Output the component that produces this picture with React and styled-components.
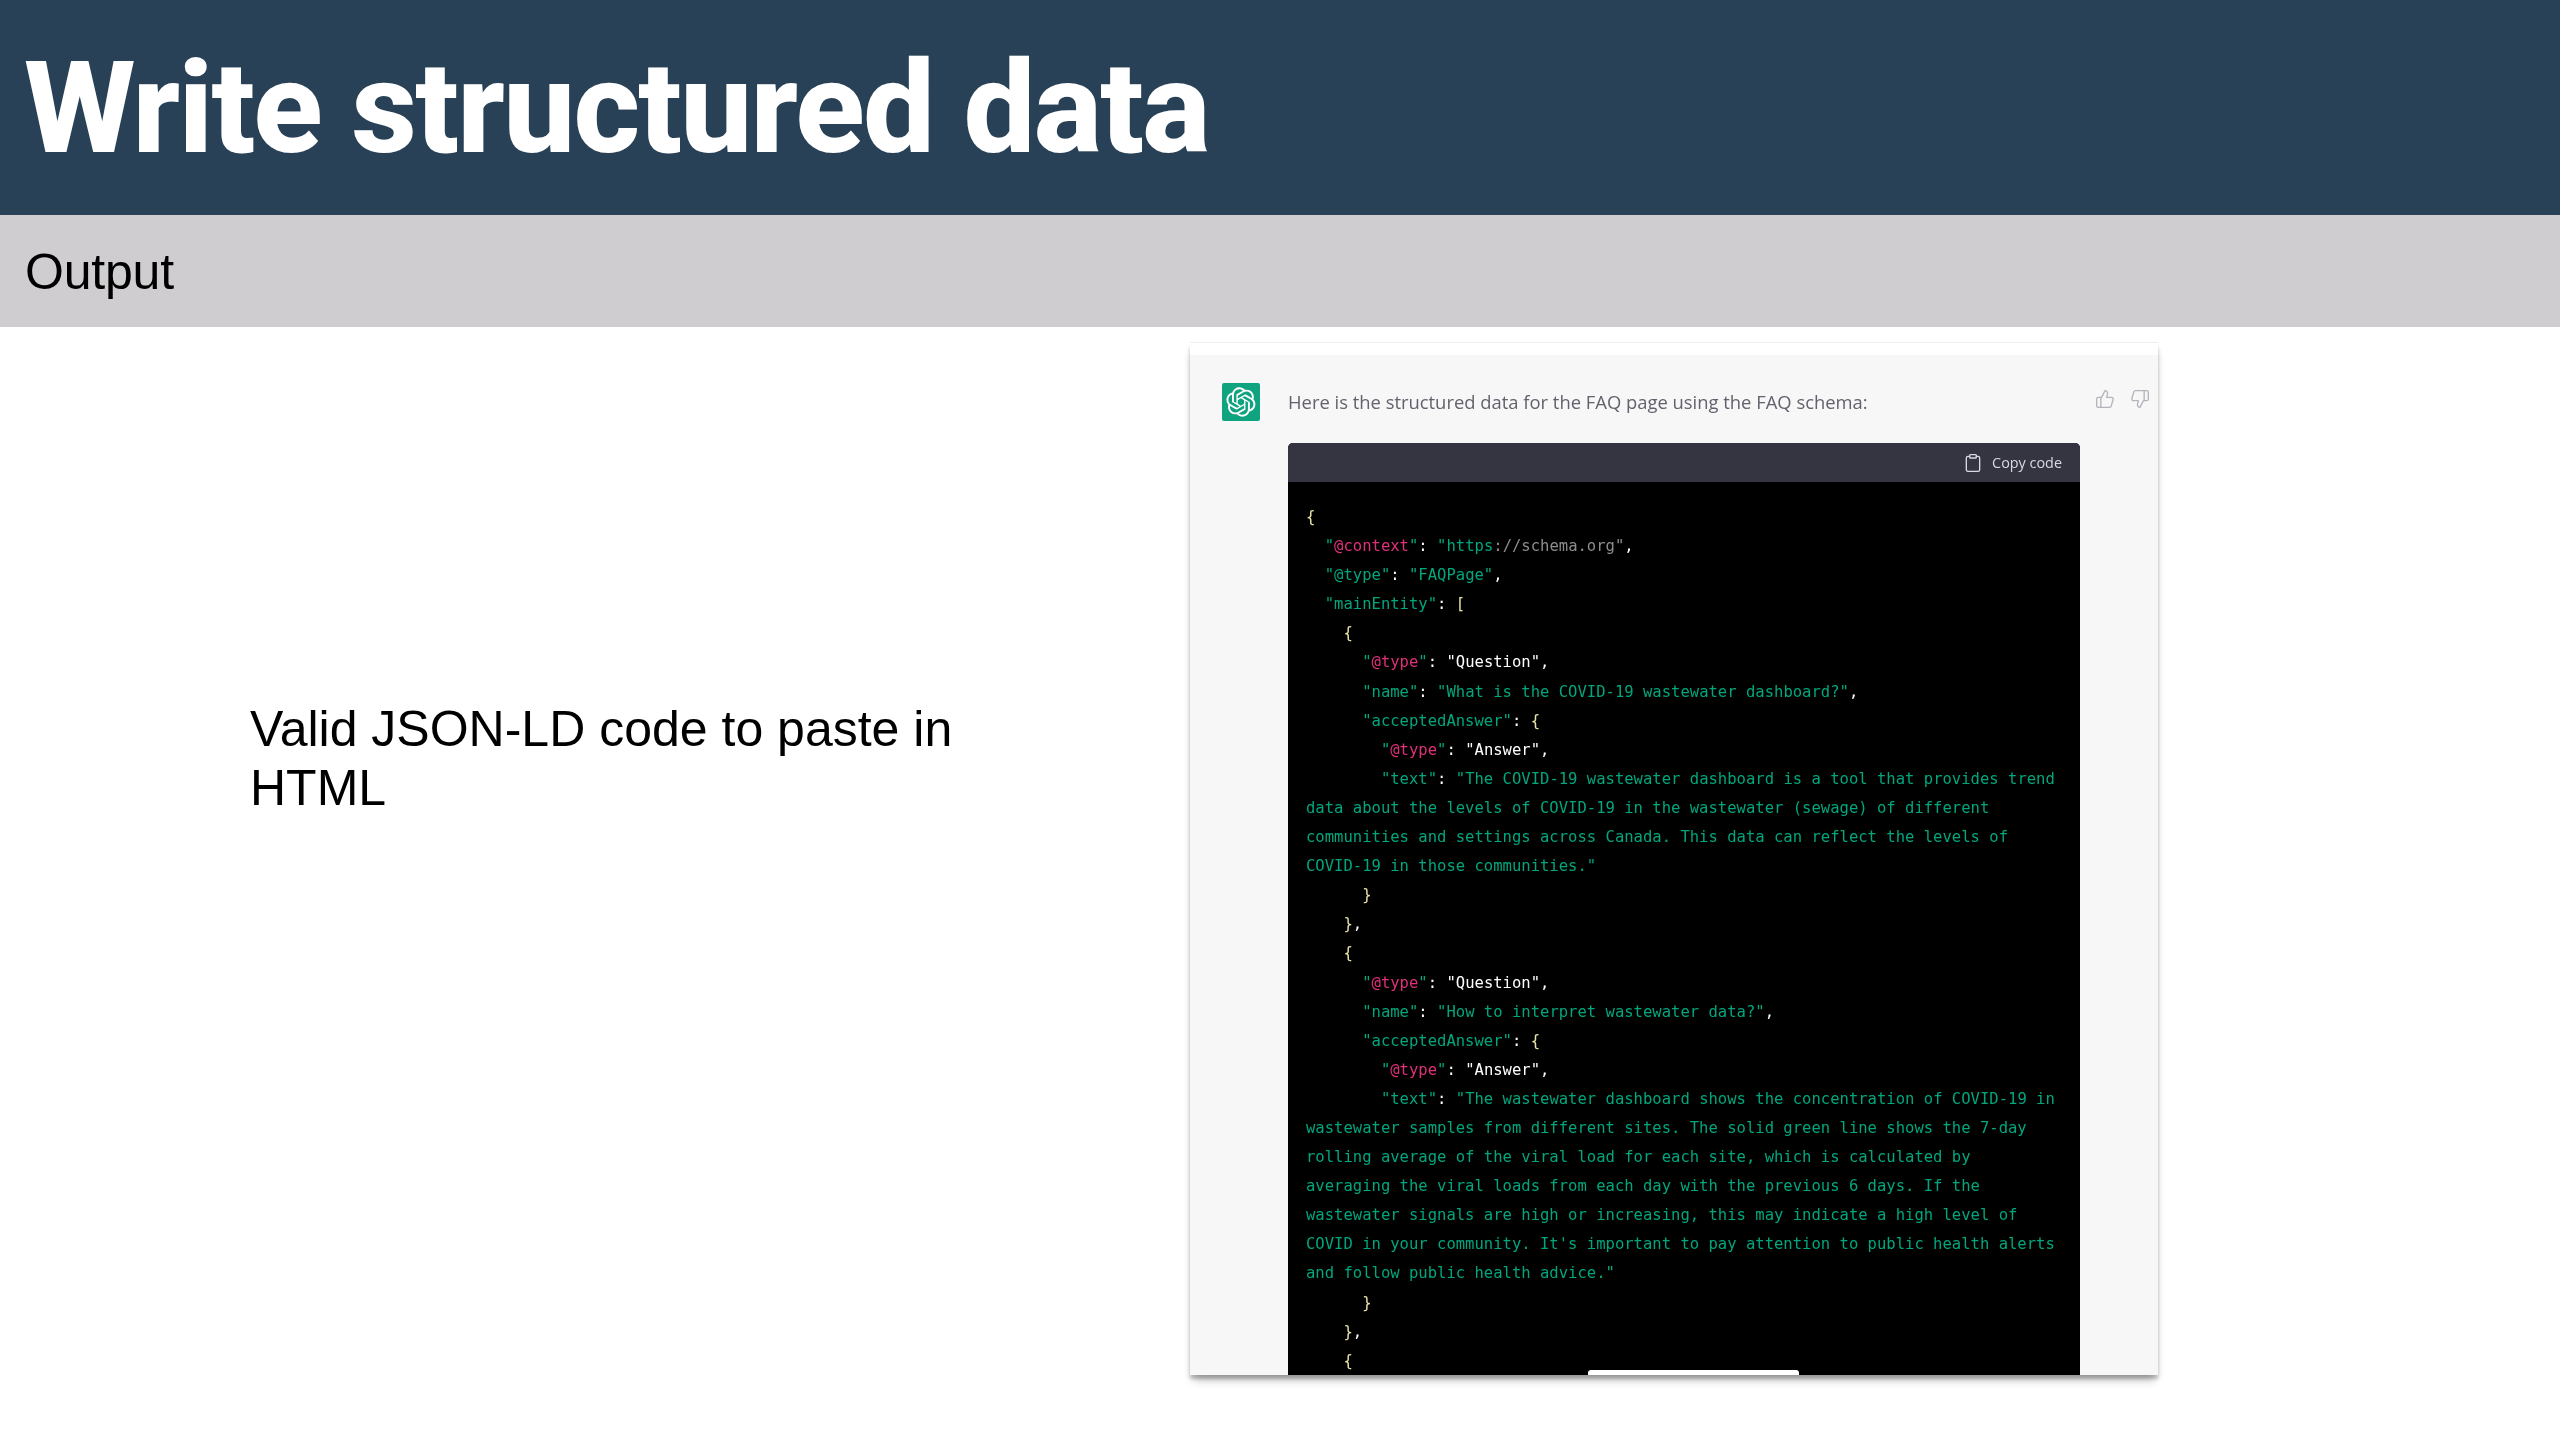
import styled, { createGlobalStyle } from 'styled-components'
import { Clipboard, ThumbsDown, ThumbsUp } from 'lucide-react'

const GlobalStyle = createGlobalStyle`
  html, body {
    margin: 0;
    background: #ffffff;
  }
  body {
    font-family: "Liberation Sans", Arial, sans-serif;
  }
`
const Page = styled.div`
  width: 2560px;
  height: 1440px;
  overflow: hidden;
  background: #ffffff;
`
const TitleBar = styled.header`
  height: 215px;
  display: flex;
  align-items: center;
  padding-left: 24px;
  background: #284157;
  box-sizing: border-box;
`
const Title = styled.h1`
  margin: 0;
  font-family: Roboto, sans-serif;
  font-size: 128px;
  font-weight: 800;
  letter-spacing: -1.72px;
  color: #ffffff;
  filter: blur(0.5px);
`
const SubBar = styled.div`
  height: 112px;
  display: flex;
  align-items: center;
  padding: 2px 0 0 25px;
  box-sizing: border-box;
  background: #cfcdd0;
  font-size: 50px;
  letter-spacing: -0.2px;
  color: #000000;
`
const Main = styled.main`
  display: flex;
  padding-top: 16px;
`
const Note = styled.p`
  width: 720px;
  margin: 0;
  padding: 357px 220px 0 250px;
  font-size: 50px;
  line-height: 59px;
  color: #000000;
`
const Card = styled.section`
  width: 968px;
  height: 1032px;
  box-sizing: border-box;
  display: grid;
  grid-template-columns: 38px 1fr;
  grid-template-rows: 38px 1fr;
  column-gap: 28px;
  row-gap: 22px;
  padding: 28px 8px 0 32px;
  border-top: 12px solid #ffffff;
  background: #f7f7f8;
  box-shadow: 0 7px 9px -3px rgba(0, 0, 0, 0.32), 0 -1px 0 #efefef, 1px 4px 3px rgba(0, 0, 0, 0.1), -1px 4px 3px rgba(0, 0, 0, 0.1);
`
const Avatar = styled.div`
  display: flex;
  align-items: center;
  justify-content: center;
  border-radius: 2px;
  background: #10a37f;
  filter: blur(0.5px);
`
const MessageRow = styled.div`
  display: flex;
  align-items: center;
  justify-content: space-between;
  filter: blur(0.6px);
`
const Message = styled.span`
  margin-bottom: 2px;
  font-family: "Open Sans", sans-serif;
  font-size: 18.4px;
  color: #62626c;
`
const Feedback = styled.div`
  display: flex;
  gap: 15px;
  margin-bottom: 6px;
  color: #b4b4bc;
`
const CodeBlock = styled.div`
  position: relative;
  width: 792px;
  display: flex;
  flex-direction: column;
  overflow: hidden;
  border-radius: 5px 5px 0 0;
  background: #000000;
`
const CodeHeader = styled.div`
  height: 39px;
  flex: none;
  display: flex;
  align-items: center;
  justify-content: flex-end;
  gap: 9px;
  padding-right: 18px;
  background: #343541;
  color: #d9d9e3;
  font-family: "Open Sans", sans-serif;
  font-size: 14.4px;
  filter: blur(0.6px);
`
const Code = styled.pre`
  margin: 0;
  padding: 21px 0 0 18px;
  font-family: "DejaVu Sans Mono", monospace;
  font-size: 15.55px;
  line-height: 29.1px;
  color: #ffffff;
  filter: blur(0.6px);
`
const Tok = styled.span`
  color: ${(p) => p.$c};
`
const Thumb = styled.div`
  position: absolute;
  left: 300px;
  bottom: 0;
  width: 211px;
  height: 5px;
  border-radius: 3px 3px 0 0;
  background: #ffffff;
`

const G = '#00a67d'
const R = '#df3079'
const W = '#ffffff'
const Y = '#e9e2a8'
const S = '#8d8d8d'

const lines = [
  [[Y, '{']],
  [[G, '  "'], [R, '@context'], [G, '"'], [W, ': '], [G, '"https'], [S, '://schema.org"'], [W, ',']],
  [[G, '  "@type"'], [W, ': '], [G, '"FAQPage"'], [W, ',']],
  [[G, '  "mainEntity"'], [W, ': '], [Y, '[']],
  [[Y, '    {']],
  [[G, '      "'], [R, '@type'], [G, '"'], [W, ': "Question",']],
  [[G, '      "name"'], [W, ': '], [G, '"What is the COVID-19 wastewater dashboard?"'], [W, ',']],
  [[G, '      "acceptedAnswer"'], [W, ': '], [Y, '{']],
  [[G, '        "'], [R, '@type'], [G, '"'], [W, ': "Answer",']],
  [[G, '        "text"'], [W, ': '], [G, '"The COVID-19 wastewater dashboard is a tool that provides trend']],
  [[G, 'data about the levels of COVID-19 in the wastewater (sewage) of different']],
  [[G, 'communities and settings across Canada. This data can reflect the levels of']],
  [[G, 'COVID-19 in those communities."']],
  [[Y, '      }']],
  [[Y, '    }'], [W, ',']],
  [[Y, '    {']],
  [[G, '      "'], [R, '@type'], [G, '"'], [W, ': "Question",']],
  [[G, '      "name"'], [W, ': '], [G, '"How to interpret wastewater data?"'], [W, ',']],
  [[G, '      "acceptedAnswer"'], [W, ': '], [Y, '{']],
  [[G, '        "'], [R, '@type'], [G, '"'], [W, ': "Answer",']],
  [[G, '        "text"'], [W, ': '], [G, '"The wastewater dashboard shows the concentration of COVID-19 in']],
  [[G, 'wastewater samples from different sites. The solid green line shows the 7-day']],
  [[G, 'rolling average of the viral load for each site, which is calculated by']],
  [[G, 'averaging the viral loads from each day with the previous 6 days. If the']],
  [[G, 'wastewater signals are high or increasing, this may indicate a high level of']],
  [[G, "COVID in your community. It's important to pay attention to public health alerts"]],
  [[G, 'and follow public health advice."']],
  [[Y, '      }']],
  [[Y, '    }'], [W, ',']],
  [[Y, '    {']],
]

function Logo() {
  return (
    <svg width="30" height="30" viewBox="0 0 41 41" fill="#ffffff">
      <path d="M37.5324 16.8707C37.9808 15.5241 38.1363 14.0974 37.9886 12.6859C37.8409 11.2744 37.3934 9.91076 36.676 8.68622C35.6126 6.83404 33.9882 5.3676 32.0373 4.4985C30.0864 3.62941 27.9098 3.40259 25.8215 3.85078C24.8796 2.7893 23.7219 1.94125 22.4257 1.36341C21.1295 0.785575 19.7249 0.491269 18.3058 0.500197C16.1708 0.495044 14.0893 1.16803 12.3614 2.42214C10.6335 3.67624 9.34853 5.44666 8.6917 7.47815C7.30085 7.76286 5.98686 8.3414 4.8377 9.17505C3.68854 10.0087 2.73073 11.0782 2.02839 12.312C0.956464 14.1591 0.498905 16.2988 0.721698 18.4228C0.944492 20.5467 1.83612 22.5449 3.268 24.1293C2.81966 25.4759 2.66413 26.9026 2.81182 28.3141C2.95951 29.7256 3.40701 31.0892 4.12437 32.3138C5.18791 34.1659 6.8123 35.6322 8.76321 36.5013C10.7141 37.3704 12.8907 37.5973 14.9789 37.1492C15.9208 38.2107 17.0786 39.0587 18.3747 39.6366C19.6709 40.2144 21.0755 40.5087 22.4946 40.4998C24.6307 40.5054 26.7133 39.8321 28.4418 38.5772C30.1704 37.3223 31.4556 35.5506 32.1119 33.5179C33.5027 33.2332 34.8167 32.6547 35.9659 31.821C37.115 30.9874 38.0728 29.9178 38.7752 28.684C39.8458 26.8371 40.3023 24.6979 40.0789 22.5748C39.8556 20.4517 38.9639 18.4544 37.5324 16.8707ZM22.4978 37.8849C20.7443 37.8874 19.0459 37.2733 17.6994 36.1501C17.7601 36.117 17.8666 36.0586 17.936 36.0161L25.9004 31.4156C26.1003 31.3019 26.2663 31.137 26.3813 30.9378C26.4964 30.7386 26.5563 30.5124 26.5549 30.2825V19.0542L29.9213 20.998C29.9389 21.0068 29.9541 21.0198 29.9656 21.0359C29.977 21.052 29.9842 21.0707 29.9867 21.0902V30.3889C29.9842 32.375 29.1946 34.2791 27.7909 35.6841C26.3872 37.0892 24.4838 37.8806 22.4978 37.8849ZM6.39227 31.0064C5.51397 29.4888 5.19742 27.7107 5.49804 25.9832C5.55718 26.0187 5.66048 26.0818 5.73461 26.1244L13.699 30.7248C13.8975 30.8408 14.1233 30.902 14.3532 30.902C14.583 30.902 14.8088 30.8408 15.0073 30.7248L24.731 25.1103V28.9979C24.7321 29.0177 24.7283 29.0376 24.7199 29.0556C24.7115 29.0736 24.6988 29.0893 24.6829 29.1012L16.6317 33.7497C14.9096 34.7416 12.8643 35.0097 10.9447 34.4954C9.02506 33.9811 7.38785 32.7263 6.39227 31.0064ZM4.29707 13.6194C5.17156 12.0998 6.55279 10.9364 8.19885 10.3327C8.19885 10.4013 8.19491 10.5228 8.19491 10.6071V19.808C8.19351 20.0378 8.25334 20.2638 8.36823 20.4629C8.48312 20.6619 8.64893 20.8267 8.84863 20.9404L18.5723 26.5542L15.206 28.4979C15.1894 28.5089 15.1703 28.5155 15.1505 28.5173C15.1307 28.5191 15.1107 28.516 15.0924 28.5082L7.04046 23.8557C5.32135 22.8601 4.06716 21.2235 3.55289 19.3046C3.03862 17.3858 3.30624 15.3413 4.29707 13.6194ZM31.955 20.0556L22.2312 14.4411L25.5976 12.4981C25.6142 12.4872 25.6333 12.4805 25.6531 12.4787C25.6729 12.4769 25.6928 12.4801 25.7111 12.4879L33.7631 17.1364C34.9967 17.849 36.0017 18.8982 36.6606 20.1613C37.3194 21.4244 37.6047 22.849 37.4832 24.2684C37.3617 25.6878 36.8382 27.0432 35.9743 28.1759C35.1103 29.3086 33.9415 30.1717 32.6047 30.6641C32.6047 30.5947 32.6047 30.4733 32.6047 30.3889V21.188C32.6066 20.9586 32.5474 20.7328 32.4332 20.5338C32.319 20.3348 32.154 20.1698 31.955 20.0556ZM35.3055 15.0128C35.2464 14.9765 35.1431 14.9142 35.069 14.8717L27.1045 10.2712C26.906 10.1554 26.6803 10.0943 26.4504 10.0943C26.2206 10.0943 25.9948 10.1554 25.7963 10.2712L16.0726 15.8858V11.9982C16.0715 11.9783 16.0753 11.9585 16.0837 11.9405C16.0921 11.9225 16.1048 11.9068 16.1207 11.8949L24.1719 7.25025C25.4053 6.53903 26.8158 6.19376 28.2383 6.25482C29.6608 6.31589 31.0364 6.78077 32.2044 7.59508C33.3723 8.40939 34.2842 9.53945 34.8334 10.8531C35.3826 12.1667 35.5464 13.6095 35.3055 15.0128ZM14.2424 21.9419L10.8752 19.9981C10.8576 19.9893 10.8423 19.9763 10.8309 19.9602C10.8195 19.9441 10.8122 19.9254 10.8098 19.9058V10.6071C10.8107 9.18295 11.2173 7.78848 11.9819 6.58696C12.7466 5.38544 13.8377 4.42659 15.1275 3.82264C16.4173 3.21869 17.8524 2.99464 19.2649 3.1767C20.6775 3.35876 22.0089 3.93941 23.1034 4.85067C23.0427 4.88379 22.937 4.94215 22.8668 4.98473L14.9024 9.58517C14.7025 9.69878 14.5366 9.86356 14.4215 10.0626C14.3065 10.2616 14.2466 10.4877 14.2479 10.7175L14.2424 21.9419ZM16.071 17.9991L20.4018 15.4978L24.7325 17.9975V22.9985L20.4018 25.4983L16.071 22.9985V17.9991Z" />
    </svg>
  )
}

function App() {
  return (
    <Page>
      <GlobalStyle />
      <TitleBar>
        <Title>Write structured data</Title>
      </TitleBar>
      <SubBar>Output</SubBar>
      <Main>
        <Note>Valid JSON-LD code to paste in HTML</Note>
        <Card>
          <Avatar>
            <Logo />
          </Avatar>
          <MessageRow>
            <Message>Here is the structured data for the FAQ page using the FAQ schema:</Message>
            <Feedback>
              <ThumbsUp size={20} strokeWidth={1.6} />
              <ThumbsDown size={20} strokeWidth={1.6} />
            </Feedback>
          </MessageRow>
          <div />
          <CodeBlock>
            <CodeHeader>
              <Clipboard size={20} strokeWidth={1.6} />
              Copy code
            </CodeHeader>
            <Code>
              {lines.map((toks, i) => (
                <div key={i}>
                  {toks.map(([c, t], j) => (
                    <Tok key={j} $c={c}>
                      {t}
                    </Tok>
                  ))}
                </div>
              ))}
            </Code>
            <Thumb />
          </CodeBlock>
        </Card>
      </Main>
    </Page>
  )
}

export default App
